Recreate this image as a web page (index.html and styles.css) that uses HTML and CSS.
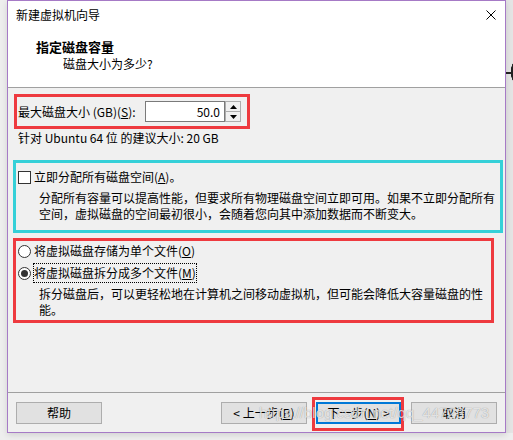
FILE: index.html
```html
<!DOCTYPE html>
<html lang="zh-CN">
<head>
<meta charset="utf-8">
<title>新建虚拟机向导</title>
<link rel="stylesheet" href="styles.css">
</head>
<body>
<div class="desk-strip"></div>
<div class="window">
  <div class="header">
    <div class="titlebar">
      <span class="title">新建虚拟机向导</span>
      <svg class="close" width="10" height="10" viewBox="0 0 10 10"><path d="M0.5 0.5 L9.5 9.5 M9.5 0.5 L0.5 9.5" stroke="#000" stroke-width="1" fill="none"/></svg>
    </div>
    <div class="heading">指定磁盘容量</div>
    <div class="subtitle">磁盘大小为多少?</div>
  </div>
  <div class="body">
    <div class="size-box">
      <span class="size-label">最大磁盘大小 (GB)(<u>S</u>):</span>
      <span class="spin-input">50.0</span>
      <span class="spinner">
        <span class="spin-btn"><svg width="7" height="4" viewBox="0 0 7 4"><path d="M3.5 0 L7 4 L0 4 Z" fill="#000"/></svg></span>
        <span class="spin-btn"><svg width="7" height="4" viewBox="0 0 7 4"><path d="M0 0 L7 0 L3.5 4 Z" fill="#000"/></svg></span>
      </span>
    </div>
    <div class="hint">针对 Ubuntu 64 位 的建议大小: 20 GB</div>
    <div class="alloc-box">
      <div class="check-row">
        <span class="checkbox"></span>
        <span>立即分配所有磁盘空间(<u>A</u>)。</span>
      </div>
      <div class="desc">分配所有容量可以提高性能，但要求所有物理磁盘空间立即可用。如果不立即分配所有<br>空间，虚拟磁盘的空间最初很小，会随着您向其中添加数据而不断变大。</div>
    </div>
    <div class="split-box">
      <div class="radio-row">
        <span class="radio"></span>
        <span>将虚拟磁盘存储为单个文件(<u>O</u>)</span>
      </div>
      <div class="radio-row second">
        <span class="radio checked"></span>
        <span class="focus">将虚拟磁盘拆分成多个文件(<u>M</u>)</span>
      </div>
      <div class="desc split-desc">拆分磁盘后，可以更轻松地在计算机之间移动虚拟机，但可能会降低大容量磁盘的性<br>能。</div>
    </div>
  </div>
  <div class="footer">
    <button class="btn">帮助</button>
    <span class="spacer"></span>
    <button class="btn">&lt; 上一步(<u>B</u>)</button>
    <span class="mark"><button class="btn default">下一步(<u>N</u>) &gt;</button></span>
    <button class="btn cancel">取消</button>
  </div>
  <div class="watermark">https://blog.csdn.net/qq_44723773</div>
</div>
</body>
</html>
```
FILE: styles.css
```css
html, body {
  margin: 0;
  padding: 0;
}
body {
  width: 513px;
  height: 440px;
  overflow: hidden;
  background: #eeeeee;
  font-family: "Noto Sans CJK SC", "Liberation Sans", sans-serif;
  font-size: 12px;
  color: #000;
  position: relative;
}
.desk-strip {
  position: absolute;
  left: 506px;
  top: 0;
  width: 7px;
  height: 433px;
  background:
    linear-gradient(#222, #222) 0 72px / 7px 2px no-repeat,
    radial-gradient(circle at 24px 72px, transparent 16px, #222 16.5px, #222 19px, transparent 19.5px) 0 0 / 7px 120px no-repeat,
    #e4e4e4;
}
.window {
  position: relative;
  margin-left: 7px;
  width: 499px;
  height: 433px;
  box-sizing: border-box;
  border: 1px solid #a67ac6;
  background: #f0f0f0;
  display: flex;
  flex-direction: column;
  box-shadow: 0 2px 6px rgba(0, 0, 0, 0.12);
}
.header {
  background: #fff;
  height: 87px;
  box-sizing: border-box;
  border-bottom: 1px solid #a0a0a0;
  flex: none;
}
.titlebar {
  height: 28px;
  display: flex;
  align-items: center;
  padding-left: 8px;
  padding-right: 9px;
}
.title {
  line-height: 28px;
}
.close {
  margin-left: auto;
  display: block;
}
.heading {
  margin-top: 9px;
  padding-left: 28px;
  font-size: 13px;
  font-weight: bold;
  line-height: 18px;
}
.subtitle {
  padding-left: 55px;
  line-height: 16px;
}
.body {
  height: 304px;
  flex: none;
  display: flex;
  flex-direction: column;
  align-items: flex-start;
}
.size-box {
  margin-top: 6px;
  margin-left: 6px;
  width: 236px;
  height: 35px;
  box-sizing: border-box;
  border: 3px solid #ee3a3f;
  padding: 4px 0 0 1px;
  display: flex;
  align-items: flex-start;
}
.size-label {
  line-height: 21px;
  width: 127px;
}
.spin-input {
  width: 80px;
  height: 21px;
  box-sizing: border-box;
  border: 1px solid #7a7a7a;
  background: #fff;
  text-align: right;
  padding-right: 4px;
  line-height: 19px;
}
.spinner {
  width: 16px;
  height: 21px;
  display: flex;
  flex-direction: column;
}
.spin-btn {
  flex: 1;
  box-sizing: border-box;
  border: 1px solid #adadad;
  background: #f0f0f0;
  display: flex;
  align-items: center;
  justify-content: center;
}
.spin-btn + .spin-btn {
  border-top: none;
}
.spin-btn svg {
  display: block;
}
.hint {
  margin-top: 1px;
  margin-left: 10px;
  line-height: 16px;
}
.alloc-box {
  margin-top: 14px;
  margin-left: 5px;
  width: 490px;
  height: 73px;
  box-sizing: border-box;
  border: 3px solid #35d0d8;
  padding: 5px 0 0 2px;
}
.check-row {
  display: flex;
  align-items: center;
  height: 18px;
  line-height: 18px;
}
.checkbox {
  width: 13px;
  height: 13px;
  box-sizing: border-box;
  border: 1px solid #333;
  background: #fff;
  margin-right: 3px;
}
.desc {
  padding-left: 21px;
  line-height: 16px;
  margin-top: 4px;
  white-space: nowrap;
}
.split-box {
  margin-top: 5px;
  margin-left: 5px;
  width: 481px;
  height: 85px;
  box-sizing: border-box;
  border: 3px solid #ee3a3f;
  padding: 0 0 0 2px;
}
.radio-row {
  display: flex;
  align-items: center;
  height: 20px;
  line-height: 18px;
}
.radio-row.second {
  margin-top: 2px;
}
.radio {
  width: 13px;
  height: 13px;
  box-sizing: border-box;
  border: 1px solid #333;
  border-radius: 50%;
  background: #fff;
  margin-right: 3px;
  display: flex;
  align-items: center;
  justify-content: center;
}
.radio.checked::after {
  content: "";
  width: 7px;
  height: 7px;
  border-radius: 50%;
  background: #333;
}
.focus {
  outline: 1px dotted #000;
}
.split-desc {
  margin-top: 3px;
}
.footer {
  flex: none;
  height: 40px;
  box-sizing: border-box;
  border-top: 1px solid #a0a0a0;
  padding: 9px 8px 0 8px;
  display: flex;
  align-items: flex-start;
}
.spacer {
  flex: 1;
}
.btn {
  width: 86px;
  height: 22px;
  box-sizing: border-box;
  border: 1px solid #adadad;
  background: #e1e1e1;
  font-family: "Noto Sans CJK SC", "Liberation Sans", sans-serif;
  font-size: 12px;
  color: #000;
  padding: 0;
  line-height: 20px;
  text-align: center;
  margin: 0;
}
.mark {
  margin: -5px -3px -7px 5px;
  padding: 2px 0 4px 1px;
  border: 3px solid #ee3a3f;
  display: flex;
}
.btn.default {
  width: 85px;
  border: 1px solid #0078d7;
  box-shadow: inset 0 0 0 1px #0078d7;
}
.btn.cancel {
  margin-left: 10px;
}
.watermark {
  position: absolute;
  left: 251px;
  top: 403px;
  font-family: "Liberation Sans", sans-serif;
  font-size: 15px;
  line-height: 18px;
  color: rgba(248, 248, 248, 0.8);
  text-shadow: 0 0 1px rgba(0, 0, 0, 0.4);
  pointer-events: none;
  white-space: nowrap;
}
```
